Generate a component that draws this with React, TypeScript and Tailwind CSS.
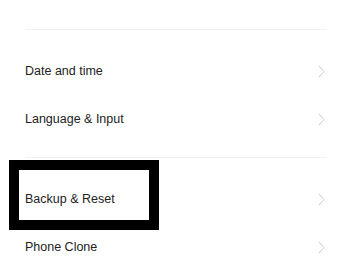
import React from 'react';

// Settings list with an annotation box over "Backup & Reset"

const Chevron: React.FC = () => (
  <svg width="7" height="13" viewBox="0 0 7 13" fill="none" className="flex-shrink-0">
    <polyline points="1,1 6,6.5 1,12" stroke="#c9c9c9" strokeWidth="1" />
  </svg>
);

const Row: React.FC<{ label: string }> = ({ label }) => (
  <div className="h-12 flex items-center justify-between pl-[25px] pr-[15px]">
    <span className="text-[12.5px] text-[#222]">{label}</span>
    <Chevron />
  </div>
);

const App: React.FC = () => {
  return (
    <div
      className="relative w-[340px] h-[279px] bg-white overflow-hidden"
      style={{ fontFamily: '"Liberation Sans", Arial, sans-serif' }}
    >
      <div className="h-[29px]" />
      <div className="h-px bg-[#f1f1f1] ml-[25px] mr-[13px]" />
      <div className="pt-[17px] pb-[14px]">
        <Row label="Date and time" />
        <Row label="Language & Input" />
      </div>
      <div className="h-px bg-[#f1f1f1] ml-[25px] mr-[13px]" />
      <div className="pt-[17px]">
        <Row label="Backup & Reset" />
        <Row label="Phone Clone" />
      </div>

      {/* annotation highlight */}
      <div className="absolute left-[9px] top-[160px] w-[150px] h-[70px] border-[10px] border-black" />
    </div>
  );
};

export default App;
